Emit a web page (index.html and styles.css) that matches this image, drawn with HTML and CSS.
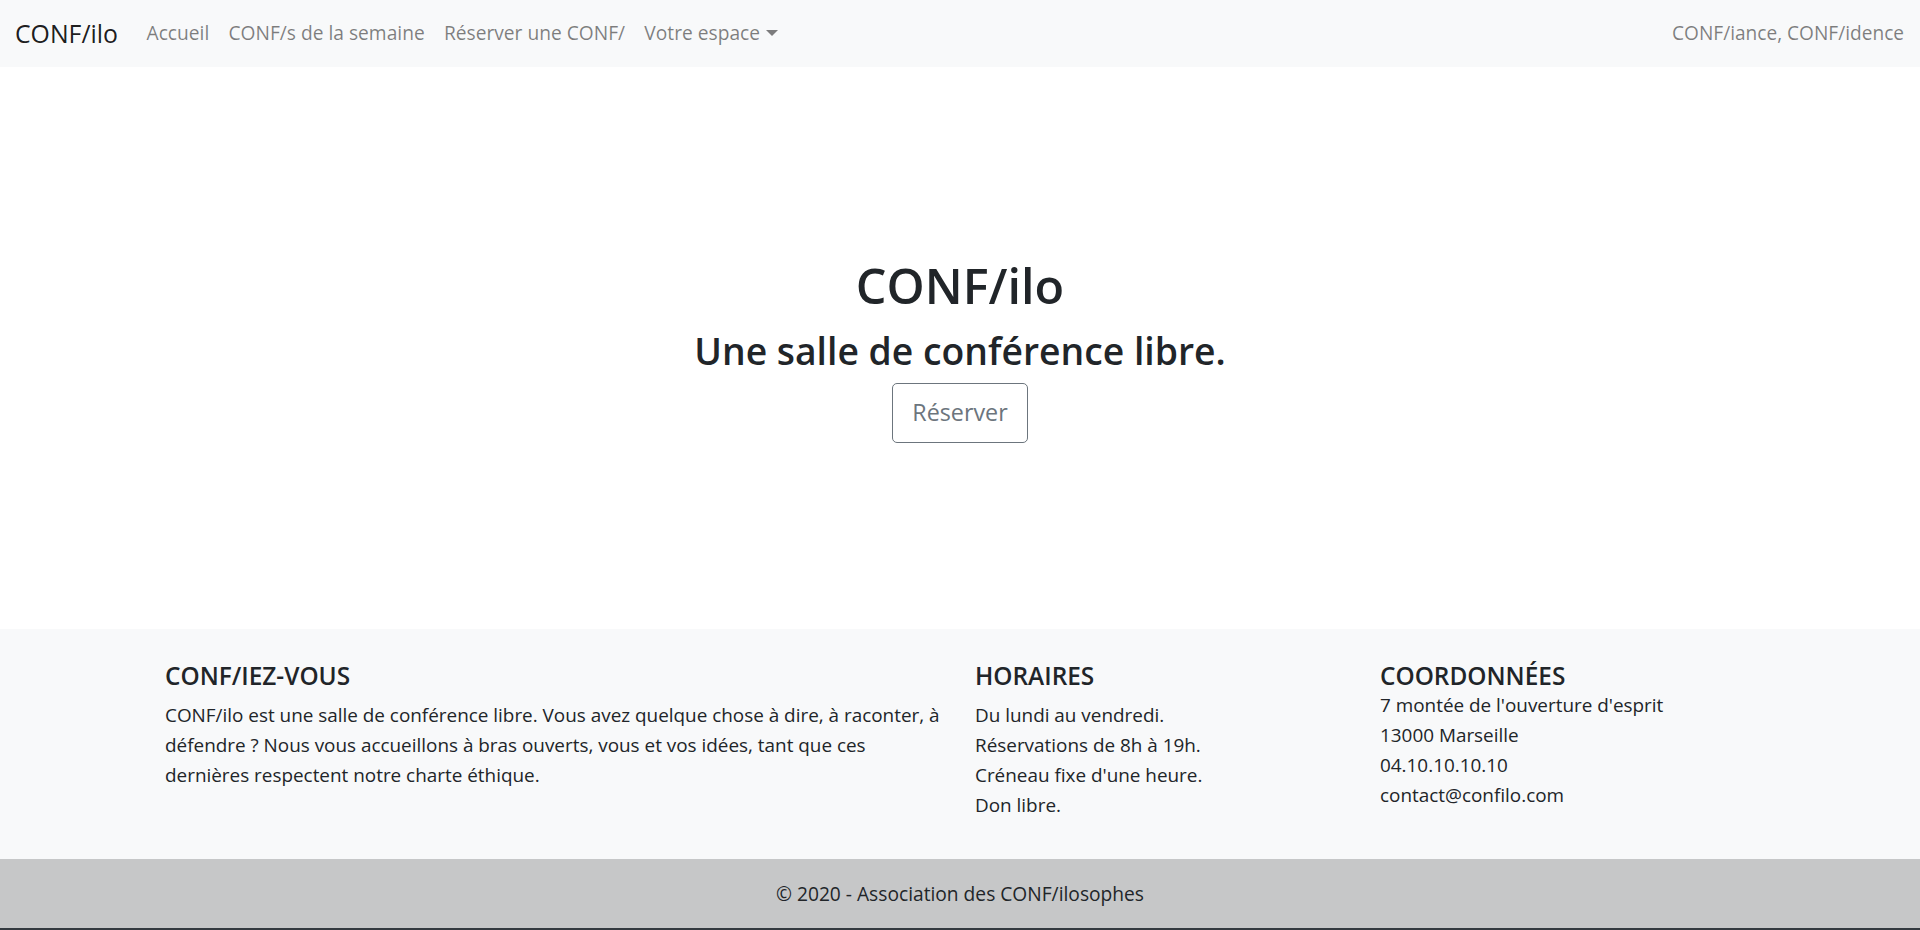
FILE: index.html
```html
<!DOCTYPE html>
<html lang="fr">
<head>
<meta charset="utf-8">
<title>CONF/ilo</title>
<link rel="stylesheet" href="styles.css">
</head>
<body>
<nav class="navbar">
  <div class="nav-left">
    <a class="brand" href="#">CONF/ilo</a>
    <ul class="nav-links">
      <li><a class="nav-link" href="#">Accueil</a></li>
      <li><a class="nav-link" href="#">CONF/s de la semaine</a></li>
      <li><a class="nav-link" href="#">Réserver une CONF/</a></li>
      <li><a class="nav-link" href="#">Votre espace<span class="caret"></span></a></li>
    </ul>
  </div>
  <span class="navbar-text">CONF/iance, CONF/idence</span>
</nav>

<main class="hero">
  <h1 class="hero-title">CONF/ilo</h1>
  <h2 class="hero-sub">Une salle de conférence libre.</h2>
  <a class="btn-outline" href="#">Réserver</a>
</main>

<footer class="footer">
  <div class="footer-row">
    <div class="col col-wide">
      <h5 class="footer-title">CONF/IEZ-VOUS</h5>
      <p class="footer-text">CONF/ilo est une salle de conférence libre. Vous avez quelque chose à dire, à raconter, à défendre ? Nous vous accueillons à bras ouverts, vous et vos idées, tant que ces dernières respectent notre charte éthique.</p>
    </div>
    <div class="col">
      <h5 class="footer-title">HORAIRES</h5>
      <p class="footer-text">Du lundi au vendredi.<br>Réservations de 8h à 19h.<br>Créneau fixe d'une heure.<br>Don libre.</p>
    </div>
    <div class="col">
      <h5 class="footer-title tight">COORDONNÉES</h5>
      <address class="footer-text">7 montée de l'ouverture d'esprit<br>13000 Marseille<br>04.10.10.10.10<br>contact@confilo.com</address>
    </div>
  </div>
</footer>

<div class="copyright">© 2020 - Association des CONF/ilosophes</div>
</body>
</html>
```

FILE: styles.css
```css
* { box-sizing: border-box; }

html, body {
  margin: 0;
  padding: 0;
}

body {
  font-family: "Open Sans", "Noto Sans", "Liberation Sans", sans-serif;
  font-size: 19px;
  line-height: 28.8px;
  color: #212529;
  background: #fff;
}

a { text-decoration: none; }

/* Navbar */
.navbar {
  display: flex;
  align-items: center;
  justify-content: space-between;
  height: 67px;
  padding: 0 16px 0 15px;
  background: #f8f9fa;
}

.nav-left {
  display: flex;
  align-items: center;
}

.brand {
  font-size: 24.8px;
  line-height: 36px;
  color: rgba(0, 0, 0, 0.9);
  margin-right: 19px;
}

.nav-links {
  display: flex;
  list-style: none;
  margin: 0;
  padding: 0;
}

.nav-link {
  display: block;
  padding: 9.6px 9.6px;
  font-size: 19.2px;
  line-height: 28.8px;
  color: rgba(0, 0, 0, 0.5);
}

.caret {
  display: inline-block;
  margin-left: 6px;
  vertical-align: 4px;
  border-top: 6px solid rgba(0, 0, 0, 0.5);
  border-left: 6px solid transparent;
  border-right: 6px solid transparent;
}

.navbar-text {
  font-size: 19.1px;
  color: rgba(0, 0, 0, 0.5);
}

/* Hero */
.hero {
  height: 562px;
  padding-top: 4px;
  display: flex;
  flex-direction: column;
  align-items: center;
  justify-content: center;
  text-align: center;
}

.hero-title {
  margin: 0 0 12.6px;
  font-size: 48.5px;
  line-height: 57.6px;
  font-weight: 600;
}

.hero-sub {
  margin: 0 0 9.6px;
  font-size: 37.3px;
  line-height: 46px;
  font-weight: 600;
}

.btn-outline {
  display: inline-block;
  padding: 12px 19px;
  font-size: 23.3px;
  line-height: 33.5px;
  color: #6c757d;
  border: 1px solid #6c757d;
  border-radius: 5px;
  background: transparent;
}

/* Footer */
.footer {
  height: 230px;
  padding-top: 32.5px;
  background: #f8f9fa;
}

.footer-row {
  width: 1620px;
  margin: 0 auto;
  display: grid;
  grid-template-columns: 810px 405px 405px;
}

.col {
  padding: 0 15px;
}

.footer-title {
  margin: 0 0 9.6px;
  font-size: 24.4px;
  line-height: 28.8px;
  font-weight: 600;
}

.footer-title.tight {
  margin-bottom: 0;
}

.footer-text {
  margin: 0;
  font-size: 18.9px;
  line-height: 30px;
  font-style: normal;
}

/* Copyright */
.copyright {
  height: 71px;
  padding-top: 1px;
  display: flex;
  align-items: center;
  justify-content: center;
  background: #c6c7c8;
  border-bottom: 2px solid #343a40;
  font-size: 19.2px;
  color: #212529;
}
```
